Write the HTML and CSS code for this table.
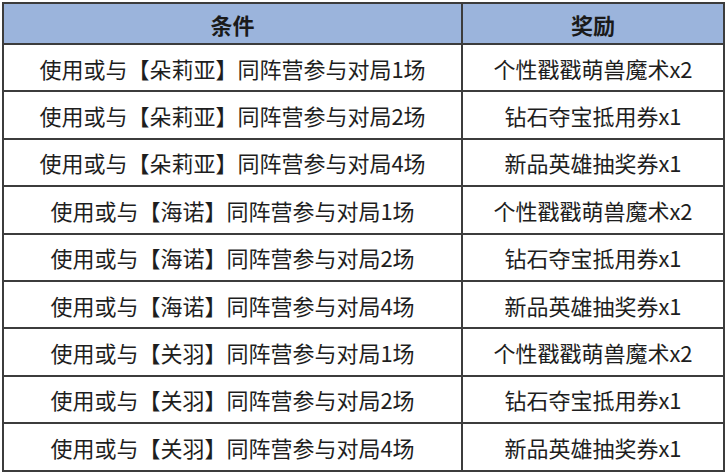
FILE: index.html
```html
<!DOCTYPE html>
<html lang="zh-CN">
<head>
<meta charset="utf-8">
<link rel="stylesheet" href="styles.css">
</head>
<body>
<table class="rewards">
  <thead>
    <tr class="head-row"><th class="col-cond">条件</th><th class="col-reward">奖励</th></tr>
  </thead>
  <tbody>
    <tr><td>使用或与【朵莉亚】同阵营参与对局1场</td><td>个性戳戳萌兽魔术x2</td></tr>
    <tr><td>使用或与【朵莉亚】同阵营参与对局2场</td><td>钻石夺宝抵用券x1</td></tr>
    <tr><td>使用或与【朵莉亚】同阵营参与对局4场</td><td>新品英雄抽奖券x1</td></tr>
    <tr><td>使用或与【海诺】同阵营参与对局1场</td><td>个性戳戳萌兽魔术x2</td></tr>
    <tr><td>使用或与【海诺】同阵营参与对局2场</td><td>钻石夺宝抵用券x1</td></tr>
    <tr><td>使用或与【海诺】同阵营参与对局4场</td><td>新品英雄抽奖券x1</td></tr>
    <tr><td>使用或与【关羽】同阵营参与对局1场</td><td>个性戳戳萌兽魔术x2</td></tr>
    <tr><td>使用或与【关羽】同阵营参与对局2场</td><td>钻石夺宝抵用券x1</td></tr>
    <tr><td>使用或与【关羽】同阵营参与对局4场</td><td>新品英雄抽奖券x1</td></tr>
  </tbody>
</table>
</body>
</html>
```
FILE: styles.css
```css
html, body {
  margin: 0;
  padding: 0;
  background: #ffffff;
}
body {
  padding: 2px 0 0 2px;
  font-family: "Noto Sans CJK SC", "Noto Sans", sans-serif;
  color: #1e1e1e;
}
.rewards {
  border-collapse: collapse;
  width: 717px;
  table-layout: fixed;
}
.rewards th,
.rewards td {
  border: 2px solid #3c3c3c;
  text-align: center;
  vertical-align: middle;
  padding: 0;
  font-size: 22px;
  line-height: 1;
}
.col-cond { width: 457px; }
.col-reward { width: 260px; }
.head-row th {
  background: #9bb4dc;
  font-weight: bold;
  height: 39px;
  color: #1a1a1a;
}
.rewards tbody td {
  height: 45.4px;
  font-weight: normal;
}
```
